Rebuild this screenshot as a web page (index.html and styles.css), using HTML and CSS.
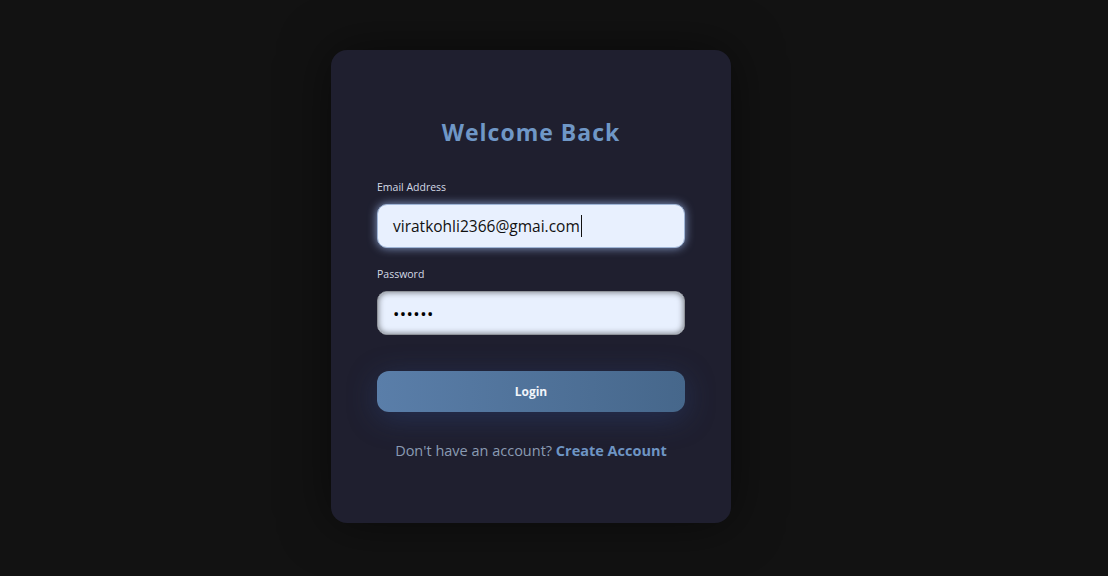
FILE: index.html
```html
<!DOCTYPE html>
<html lang="en">
<head>
<meta charset="utf-8">
<title>Login</title>
<link rel="stylesheet" href="styles.css">
</head>
<body>
<main class="page">
  <form class="card">
    <h1 class="title">Welcome Back</h1>
    <div class="field">
      <label class="label" for="email">Email Address</label>
      <div class="input input-focus" id="email"><span>viratkohli2366@gmai.com</span><span class="caret"></span></div>
    </div>
    <div class="field">
      <label class="label" for="pw">Password</label>
      <div class="input input-inset" id="pw"><span class="dots">••••••</span></div>
    </div>
    <button type="button" class="btn">Login</button>
    <p class="foot">Don't have an account? <a class="link">Create Account</a></p>
  </form>
</main>
</body>
</html>
```
FILE: styles.css
```css
* { box-sizing: border-box; }
html, body { margin: 0; height: 100%; }
body {
  background: #121212;
  font-family: "Open Sans", "Noto Sans", sans-serif;
}
.page {
  height: 576px;
  display: flex;
  justify-content: center;
  align-items: flex-start;
  padding: 50px 46px 0 0;
}
.card {
  width: 400px;
  height: 473px;
  background: #1f1f2f;
  border-radius: 16px;
  padding: 62px 46px 0;
  box-shadow: 0 0 50px rgba(0, 0, 0, 0.5);
  display: flex;
  flex-direction: column;
}
.title {
  margin: 0 0 27px;
  text-align: center;
  font-size: 23px;
  font-weight: 700;
  letter-spacing: 1px;
  color: #6f97c6;
  line-height: 40px;
}
.field { display: flex; flex-direction: column; margin-bottom: 18px; }
.label {
  font-size: 10.5px;
  color: #d4dae6;
  line-height: 16px;
  margin-bottom: 9px;
}
.input {
  height: 44px;
  border-radius: 10px;
  background: #e8f0fe;
  display: flex;
  align-items: center;
  padding: 0 15px;
  font-size: 15.5px;
  color: #111;
}
.input-focus {
  border: 1px solid #9fb5d6;
  box-shadow: 0 0 10px rgba(170, 200, 255, 0.75);
}
.input-inset {
  border: 1px solid #8e9299;
  box-shadow: inset 0 0 6px rgba(0, 0, 0, 0.55);
}
.caret { width: 1px; height: 22px; background: #111; margin-left: 1px; }
.dots { font-size: 17px; letter-spacing: 0.4px; color: #000; }
.btn {
  margin-top: 18px;
  height: 41px;
  border: 0;
  border-radius: 12px;
  background: linear-gradient(90deg, #5a7ea9, #46678b);
  color: #f2f5fa;
  font-family: inherit;
  font-size: 12px;
  font-weight: 700;
  box-shadow: 0 6px 30px rgba(50, 80, 150, 0.35);
}
.foot {
  margin: 29px 0 0;
  text-align: center;
  font-size: 14.5px;
  color: #8a9bb3;
}
.link { color: #6e95c4; font-weight: 700; }
```
